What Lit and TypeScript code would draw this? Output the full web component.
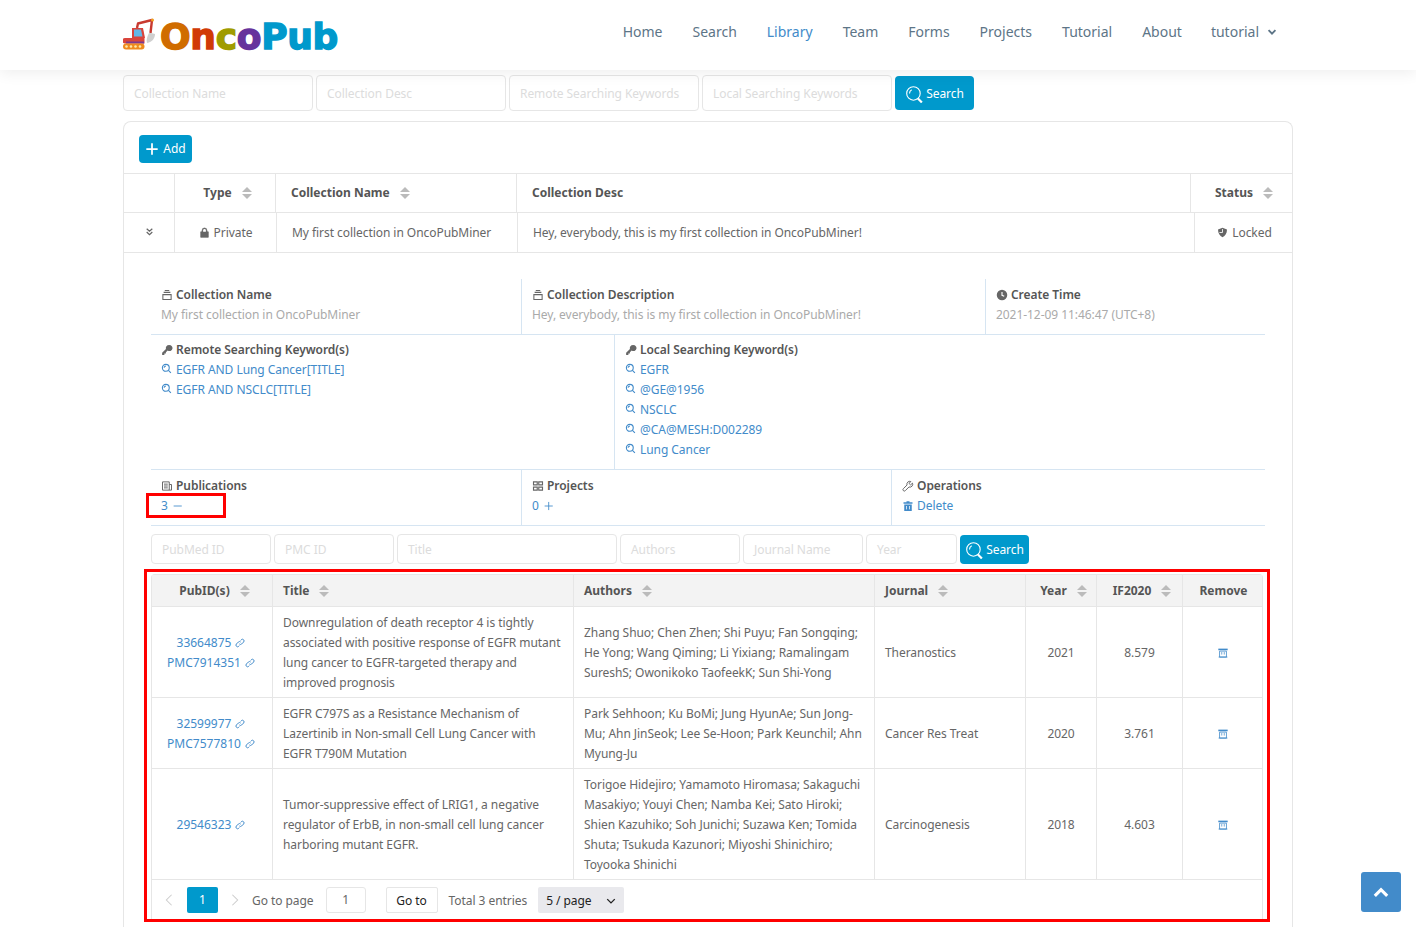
import { LitElement, html, css, svg } from "lit";
import { customElement } from "lit/decorators.js";

const ic = (w: number, body: unknown, vb = "0 0 16 16") =>
  html`<svg class="ic" width="${w}" height="${w}" viewBox="${vb}">${body}</svg>`;

const lens = (w = 11) => ic(w, svg`<circle cx="7" cy="7" r="5" fill="none" stroke="currentColor" stroke-width="1.6"/><path d="M4.6 7a2.4 2.4 0 0 1 2.4-2.4M10.8 10.8l3.6 3.6" fill="none" stroke="currentColor" stroke-width="1.6"/>`);
const bigLens = () => ic(18, svg`<circle cx="7.5" cy="7.5" r="6" fill="none" stroke="#fff" stroke-width="1"/><path d="M4 7.5a3.5 3.5 0 0 1 2-3.2" fill="none" stroke="#fff"/><path d="M11.5 12l3.5 3.5" stroke="#fff" stroke-width="2"/>`);
const drawer = () => ic(12, svg`<path d="M3.500 4.500h9M5 2h6M2.500 7.500h11v6.500h-11z" fill="none" stroke="currentColor" stroke-width="1.4"/>`);
const key = () => ic(12, svg`<path d="M10.5 1.5a4 4 0 0 0-3.9 5L1.5 11.6V14.5h3v-2h2v-1.5l2.4-2.4a4 4 0 1 0 1.6-7.1z" fill="currentColor"/>`);
const clock = () => ic(12, svg`<circle cx="8" cy="8" r="7" fill="currentColor"/><path d="M8 4v4.4l3 1.4" fill="none" stroke="#fff" stroke-width="1.5"/>`);
const pubs = () => ic(12, svg`<path d="M2 2.5h9v11H2zM11 6h3v7.5h-3M4 5.5h5M4 8h5M4 10.5h5" fill="none" stroke="currentColor" stroke-width="1.3"/>`);
const grid = () => ic(12, svg`<path d="M2 2.5h5v4H2zM9 2.5h5v4H9zM2 9.5h5v4H2zM9 9.5h5v4H9z" fill="none" stroke="currentColor" stroke-width="1.5"/>`);
const wrench = () => ic(12, svg`<path d="M14 4.2l-2.6 2.3-2-1.9 2.3-2.6A3.8 3.8 0 0 0 6.7 6.7L1.8 11.6a1.8 1.8 0 0 0 2.6 2.6l4.9-4.9A3.8 3.8 0 0 0 14 4.2z" fill="none" stroke="currentColor" stroke-width="1.3"/>`);
const trash = () => ic(12, svg`<path d="M6 1.5h4v1.5h4V5H2V3h4zM3 6h10v8.5H3z" fill="currentColor"/><path d="M6 8v4.5M10 8v4.5" stroke="#fff"/>`);
const link = () => ic(10, svg`<path d="M7 9.5a2.6 2.6 0 0 0 3.7 0l3-3a2.6 2.6 0 0 0-3.7-3.7l-1 1M9 6.5a2.6 2.6 0 0 0-3.7 0l-3 3a2.6 2.6 0 0 0 3.7 3.7l1-1" fill="none" stroke="currentColor" stroke-width="1.6"/>`);
const archive = () => ic(10, svg`<path d="M0.500 1h15v2.600H0.500z" fill="currentColor"/><path d="M2.500 5h11v9.500h-11z" fill="none" stroke="currentColor" stroke-width="1.300"/><path d="M6 6.500v4M10 6.500v4" stroke="currentColor" stroke-width="1.200"/><path d="M1 14.500h14" stroke="currentColor" stroke-width="1.400"/>`);
const lock = () => ic(11, svg`<path d="M4.500 7V5a3.500 3.500 0 0 1 7 0v2M2.500 7h11v8h-11z" fill="currentColor" stroke="currentColor" stroke-width="1"/><path d="M6 7V5a2 2 0 0 1 4 0v2z" fill="#fff"/>`);
const shield = () => ic(11, svg`<path d="M8 1l6.500 2.500C14.500 9 12 13 8 15 4 13 1.500 9 1.500 3.500z" fill="currentColor"/><path d="M8 3v5H3.500" fill="none" stroke="#fff" stroke-width="1.200"/>`);
const dbl = () => ic(9, svg`<path d="M3 3l5 4.500L13 3M3 9l5 4.500L13 9" fill="none" stroke="currentColor" stroke-width="2.200"/>`);
const sort = () => html`<span class="sort"><i class="up"></i><i class="dn"></i></span>`;
const minus = () => ic(10, svg`<path d="M1 8h13" stroke="currentColor" stroke-width="1.400"/>`);
const plus = () => ic(10, svg`<path d="M1 8h13M7.500 1.500v13" stroke="currentColor" stroke-width="1.400"/>`);

const excavator = () => html`<svg class="exc" width="34" height="32" viewBox="0 0 34 32">
  <path d="M14 10 L15 5.500 L29 2 L27.500 15" fill="none" stroke="#c8392f" stroke-width="2.400" stroke-linejoin="round"/>
  <circle cx="29.500" cy="2" r="1.500" fill="#f0a020"/>
  <path d="M26 15h2l4 1c0 4-2.500 8-8 9-1-3 0-6 2-10z" fill="#cfcfcf"/>
  <path d="M9 10h11l2 10H9z" fill="#d9443c"/>
  <path d="M11 11.500h7l1.500 7H11z" fill="#63b7e6"/>
  <path d="M2 20h19.500v5.500H2a2.500 2.500 0 0 1 0-5.500z" fill="#d9443c"/>
  <rect x="3" y="23.500" width="18" height="2" fill="#7a3a90"/>
  <rect x="0" y="25.500" width="21.500" height="6" rx="3" fill="#ef8a1d"/>
  ${[3.5, 8, 12.5, 17].map((x) => svg`<circle cx="${x}" cy="28.500" r="1.300" fill="#ffe9a8"/>`)}
</svg>`;

const NAV = ["Home", "Search", "Library", "Team", "Forms", "Projects", "Tutorial", "About"];

const ROWS = [
  {
    ids: ["33664875", "PMC7914351"],
    title: "Downregulation of death receptor 4 is tightly associated with positive response of EGFR mutant lung cancer to EGFR-targeted therapy and improved prognosis",
    authors: "Zhang Shuo; Chen Zhen; Shi Puyu; Fan Songqing; He Yong; Wang Qiming; Li Yixiang; Ramalingam SureshS; Owonikoko TaofeekK; Sun Shi-Yong",
    journal: "Theranostics", year: "2021", impact: "8.579",
  },
  {
    ids: ["32599977", "PMC7577810"],
    title: "EGFR C797S as a Resistance Mechanism of Lazertinib in Non-small Cell Lung Cancer with EGFR T790M Mutation",
    authors: "Park Sehhoon; Ku BoMi; Jung HyunAe; Sun Jong-Mu; Ahn JinSeok; Lee Se-Hoon; Park Keunchil; Ahn Myung-Ju",
    journal: "Cancer Res Treat", year: "2020", impact: "3.761",
  },
  {
    ids: ["29546323"],
    title: "Tumor-suppressive effect of LRIG1, a negative regulator of ErbB, in non-small cell lung cancer harboring mutant EGFR.",
    authors: "Torigoe Hidejiro; Yamamoto Hiromasa; Sakaguchi Masakiyo; Youyi Chen; Namba Kei; Sato Hiroki; Shien Kazuhiko; Soh Junichi; Suzawa Ken; Tomida Shuta; Tsukuda Kazunori; Miyoshi Shinichiro; Toyooka Shinichi",
    journal: "Carcinogenesis", year: "2018", impact: "4.603",
  },
];

@customElement("app-root")
export class AppRoot extends LitElement {
  static styles = css`
    :host { display: block; height: 927px; overflow: hidden; background: #fff; font-family: "Noto Sans", "Open Sans", sans-serif; font-size: 12px; line-height: 20px; color: #666; letter-spacing: -0.055px; }
    * { box-sizing: border-box; }
    .ic { display: inline-block; flex: none; vertical-align: -1px; }
    a { color: #428bca; text-decoration: none; }
    header { height: 70px; background: #fff; box-shadow: 0 3px 14px rgba(0,0,0,.07); position: relative; }
    .wrap { width: 1170px; margin: 0 auto; }
    .head { display: flex; align-items: flex-start; height: 70px; }
    .logo { display: flex; align-items: center; margin-top: 17px; height: 36px; }
    .exc { margin-right: 3px; margin-top: -2px; }
    .word { font-family: "DejaVu Sans", sans-serif; font-weight: 700; font-size: 36px; line-height: 36px; letter-spacing: -0.3px; margin-top: 4px; -webkit-text-stroke: 1.4px currentColor; }
    nav { margin-left: auto; display: flex; gap: 30px; margin-top: 22px; padding-right: 16px; font-size: 14px; color: #5d7587; letter-spacing: 0; }
    nav .on { color: #428bca; }
    nav span { display: flex; align-items: center; gap: 8px; }
    nav .last { margin-left: -1px; }
    .bar { display: flex; gap: 3px; margin-top: 5px; height: 36px; }
    .in { border: 1px solid #e6e6e6; border-radius: 4px; color: #dcdcdc; padding: 1px 10px 0; display: flex; align-items: center; background: #fff; font-size: 12px; }
    .btn { background: #0099cc; color: #fff; border-radius: 4px; display: flex; align-items: center; justify-content: center; gap: 3px; font-size: 12px; }
    .bar .in { width: 190px; }
    .bar .btn { width: 79px; height: 34px; margin-top: 1px; padding-top: 1px; }
    .card { margin-top: 10px; border: 1px solid #e6e6e6; border-radius: 8px 8px 0 0; border-bottom: 0; height: 900px; }
    .add { width: 53px; height: 28px; margin: 13px 0 10px 15px; gap: 4px; }
    .tr { display: grid; border-top: 1px solid #e6e6e6; }
    .tr > div { border-left: 1px solid #e6e6e6; display: flex; align-items: center; }
    .tr > div:first-child { border-left: 0; }
    .th { grid-template-columns: 50px 101px 241px 674px 1fr; height: 39px; font-weight: 700; color: #555; letter-spacing: 0; }
    .tb { grid-template-columns: 50px 102px 241px 677px 1fr; height: 41px; border-bottom: 1px solid #e6e6e6; }
    .center { justify-content: center; }
    .th .center { padding-left: 5px; }
    .pad { padding-left: 15px; }
    .sort { display: inline-flex; flex-direction: column; gap: 2px; margin-left: 10px; }
    .sort i { display: block; width: 0; height: 0; border-left: 5px solid transparent; border-right: 5px solid transparent; }
    .sort .up { border-bottom: 5px solid #bbb; }
    .sort .dn { border-top: 5px solid #bbb; }
    .gap { gap: 4px; }
    .lockc { padding-left: 2px; }
    .up3 { padding-bottom: 3px; }
    .detail { margin: 26px 27px 0 27px; }
    .dr { display: grid; border-bottom: 1px solid #d6e5f2; }
    .dr > div { padding: 5px 10px 0; border-left: 1px solid #d6e5f2; }
    .dr > div:first-child { border-left: 0; }
    .r1 { grid-template-columns: 370px 464px 1fr; height: 56px; }
    .r2 { grid-template-columns: 463px 1fr; height: 135px; }
    .r3 { grid-template-columns: 370px 370px 1fr; height: 56px; }
    .r1 > div, .r3 > div { padding-top: 6px; }
    .lab { font-weight: 600; color: #555; display: flex; align-items: center; gap: 3px; height: 20px; }
    .lab .ic { color: #666; }
    .val { color: #aaa; }
    .lnk { display: flex; align-items: center; gap: 4px; color: #428bca; height: 20px; }
    .lnk .ic { margin-top: -3px; }
    .del { gap: 3px; }
    .del .ic { margin-top: -1px; }
    .count { display: flex; align-items: center; gap: 5px; height: 20px; color: #428bca; }
    .mark { position: relative; }
    .mark::after { content: ""; box-sizing: border-box; position: absolute; left: -5px; top: 23px; width: 80px; height: 25px; border: 3px solid #f00; }
    .filters { display: flex; gap: 3px; margin: 8px 27px 0; height: 30px; }
    .filters .btn { width: 69px; height: 29px; margin-top: 1px; font-size: 12px; }
    .box { margin: 5px 0 0 20px; width: 1126px; height: 353px; border: 3px solid #f00; padding: 2px 4px 0 4px; }
    .tbl { border: 1px solid #e6e6e6; border-bottom: 0; border-radius: 4px 4px 0 0; height: 345px; }
    .g { display: grid; grid-template-columns: 120px 301px 301px 151px 71px 86px 1fr; }
    .g > div { border-left: 1px solid #e6e6e6; padding: 6px 10px 4px; display: flex; align-items: center; }
    .g > div:first-child { border-left: 0; }
    .g.hd { background: #f3f3f3; height: 31px; font-weight: 700; color: #555; letter-spacing: 0; }
    .g.hd > div { padding: 5px 10px; }
    .g.hd > div.sc { padding-left: 15px; }
    .g.hd > div.rm { padding-left: 12px; }
    .g.rw { border-top: 1px solid #e6e6e6; }
    .c { justify-content: center; text-align: center; }
    .g > div.ids { flex-direction: column; padding: 6px 11px 4px 9px; letter-spacing: 0; }
    .ids a { display: flex; align-items: center; gap: 4px; height: 20px; }
    .pager { border-top: 1px solid #e6e6e6; height: 40px; display: flex; align-items: center; padding: 1px 0 0 10px; }
    .pager .cur { width: 31px; height: 26px; background: #0099cc; color: #fff; border-radius: 2px; display: flex; align-items: center; justify-content: center; margin: 0 10px 0 11px; }
    .chev { color: #ccc; display: flex; }
    .lbl { margin-left: 10px; padding-top: 1px; }
    .num { width: 40px; height: 26px; border: 1px solid #e6e6e6; border-radius: 3px; display: flex; align-items: center; justify-content: center; margin-left: 12px; }
    .goto { width: 52px; height: 26px; border: 1px solid #e6e6e6; border-radius: 2px; color: #222; display: flex; align-items: center; justify-content: center; margin-left: 20px; padding-top: 2px; }
    .tot { margin-left: 11px; padding-top: 1px; }
    .size { width: 86px; height: 26px; background: #e9e9ed; border-radius: 2px; color: #222; margin-left: 11px; display: flex; align-items: center; padding: 1px 8px 0; justify-content: space-between; }
    .top { position: fixed; left: 1361px; top: 872px; width: 40px; height: 40px; background: #428bca; border-radius: 3px; display: flex; align-items: center; justify-content: center; }
  `;

  render() {
    return html`
      <header>
        <div class="wrap head">
          <div class="logo">
            ${excavator()}
            <span class="word"><span style="color:#d06c00">O</span><span style="color:#d13a05">n</span><span style="color:#a09c00">c</span><span style="color:#66339c">o</span><span style="color:#0099cc">Pub</span></span>
          </div>
          <nav>
            ${NAV.map((n) => html`<span class="${n === "Library" ? "on" : ""}">${n}</span>`)}
            <span class="last">tutorial ${ic(10, svg`<path d="M2.500 5l5.500 5.500L13.500 5" fill="none" stroke="currentColor" stroke-width="3"/>`)}</span>
          </nav>
        </div>
      </header>
      <div class="wrap">
        <div class="bar">
          <div class="in">Collection Name</div>
          <div class="in">Collection Desc</div>
          <div class="in">Remote Searching Keywords</div>
          <div class="in">Local Searching Keywords</div>
          <div class="btn">${bigLens()} Search</div>
        </div>
        <div class="card">
          <div class="btn add">${ic(14, svg`<path d="M8 1.500v13M1.500 8h13" stroke="#fff" stroke-width="2"/>`)} Add</div>
          <div class="tr th">
            <div></div>
            <div class="center">Type ${sort()}</div>
            <div class="pad">Collection Name ${sort()}</div>
            <div class="pad">Collection Desc</div>
            <div class="center">Status ${sort()}</div>
          </div>
          <div class="tr tb">
            <div class="center up3">${dbl()}</div>
            <div class="center gap">${lock()} Private</div>
            <div class="pad">My first collection in OncoPubMiner</div>
            <div class="pad">Hey, everybody, this is my first collection in OncoPubMiner!</div>
            <div class="center gap lockc">${shield()} Locked</div>
          </div>
          <div class="detail">
            <div class="dr r1">
              <div><div class="lab">${drawer()} Collection Name</div><div class="val">My first collection in OncoPubMiner</div></div>
              <div><div class="lab">${drawer()} Collection Description</div><div class="val">Hey, everybody, this is my first collection in OncoPubMiner!</div></div>
              <div><div class="lab">${clock()} Create Time</div><div class="val">2021-12-09 11:46:47 (UTC+8)</div></div>
            </div>
            <div class="dr r2">
              <div>
                <div class="lab">${key()} Remote Searching Keyword(s)</div>
                ${["EGFR AND Lung Cancer[TITLE]", "EGFR AND NSCLC[TITLE]"].map((k) => html`<div class="lnk">${lens()} ${k}</div>`)}
              </div>
              <div>
                <div class="lab">${key()} Local Searching Keyword(s)</div>
                ${["EGFR", "@GE@1956", "NSCLC", "@CA@MESH:D002289", "Lung Cancer"].map((k) => html`<div class="lnk">${lens()} ${k}</div>`)}
              </div>
            </div>
            <div class="dr r3">
              <div class="mark"><div class="lab">${pubs()} Publications</div><div class="count">3 ${minus()}</div></div>
              <div><div class="lab">${grid()} Projects</div><div class="count">0 ${plus()}</div></div>
              <div><div class="lab">${wrench()} Operations</div><div class="lnk del">${trash()} Delete</div></div>
            </div>
          </div>
          <div class="filters">
            <div class="in" style="width:120px">PubMed ID</div>
            <div class="in" style="width:120px">PMC ID</div>
            <div class="in" style="width:220px">Title</div>
            <div class="in" style="width:120px">Authors</div>
            <div class="in" style="width:120px">Journal Name</div>
            <div class="in" style="width:91px">Year</div>
            <div class="btn">${bigLens()} Search</div>
          </div>
          <div class="box">
            <div class="tbl">
              <div class="g hd">
                <div class="c sc">PubID(s) ${sort()}</div>
                <div>Title ${sort()}</div>
                <div>Authors ${sort()}</div>
                <div>Journal ${sort()}</div>
                <div class="c sc">Year ${sort()}</div>
                <div class="c sc">IF2020 ${sort()}</div>
                <div class="c rm">Remove</div>
              </div>
              ${ROWS.map((r) => html`
                <div class="g rw">
                  <div class="c ids">${r.ids.map((i) => html`<a>${i} ${link()}</a>`)}</div>
                  <div>${r.title}</div>
                  <div>${r.authors}</div>
                  <div>${r.journal}</div>
                  <div class="c">${r.year}</div>
                  <div class="c">${r.impact}</div>
                  <div class="c"><a>${archive()}</a></div>
                </div>`)}
              <div class="pager">
                <span class="chev">${ic(14, svg`<path d="M11 2L5 8l6 6" fill="none" stroke="currentColor" stroke-width="1.200"/>`)}</span>
                <span class="cur">1</span>
                <span class="chev">${ic(14, svg`<path d="M5 2l6 6-6 6" fill="none" stroke="currentColor" stroke-width="1.200"/>`)}</span>
                <span class="lbl">Go to page</span>
                <span class="num">1</span>
                <span class="goto">Go to</span>
                <span class="tot">Total 3 entries</span>
                <span class="size">5 / page ${ic(10, svg`<path d="M2 5l6 6 6-6" fill="none" stroke="#222" stroke-width="2.200"/>`)}</span>
              </div>
            </div>
          </div>
        </div>
      </div>
      <div class="top">${ic(18, svg`<path d="M2.500 11.500L8 6l5.500 5.500" fill="none" stroke="#fff" stroke-width="2.800"/>`)}</div>
    `;
  }
}
